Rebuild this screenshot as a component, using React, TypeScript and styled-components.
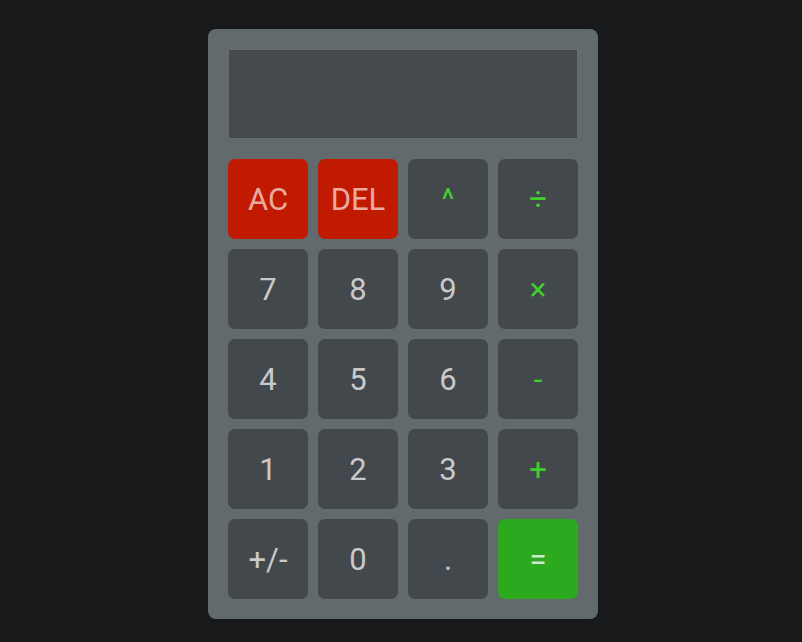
import React from "react";
import styled, { createGlobalStyle } from "styled-components";

const Global = createGlobalStyle`
  html, body { margin: 0; padding: 0; background: #18191b; }
  body { font-family: Roboto, "Noto Sans", sans-serif; }
`;

const Page = styled.div`
  display: flex;
  justify-content: center;
  align-items: flex-start;
  padding-top: 29px;
  padding-left: 4px;
  min-height: 642px;
  box-sizing: border-box;
`;

const Calc = styled.div`
  width: 390px;
  box-sizing: border-box;
  padding: 20px;
  background: #636a6d;
  border-radius: 8px;
  display: flex;
  flex-direction: column;
  gap: 20px;
`;

const Display = styled.div`
  height: 90px;
  box-sizing: border-box;
  background: #454a4e;
  border: 1px solid #6a6b6b;
`;

const Grid = styled.div`
  display: grid;
  grid-template-columns: repeat(4, 80px);
  grid-auto-rows: 80px;
  gap: 10px;
`;

type Kind = "num" | "op" | "clear" | "eq";

const bg: Record<Kind, string> = {
  num: "#43484c",
  op: "#43484c",
  clear: "#c01a00",
  eq: "#2ba91f",
};
const fg: Record<Kind, string> = {
  num: "#c9c9c9",
  op: "#3fd02f",
  clear: "#eaaaa2",
  eq: "#cde9c8",
};

const Key = styled.button<{ $kind: Kind }>`
  border: none;
  border-radius: 7px;
  background: ${(p) => bg[p.$kind]};
  color: ${(p) => fg[p.$kind]};
  font-family: Roboto, "Noto Sans", sans-serif;
  font-size: 31px;
  line-height: 1;
  display: flex;
  align-items: center;
  justify-content: center;
  padding: 0;
  cursor: pointer;
`;

const keys: [string, Kind][] = [
  ["AC", "clear"], ["DEL", "clear"], ["^", "op"], ["÷", "op"],
  ["7", "num"], ["8", "num"], ["9", "num"], ["×", "op"],
  ["4", "num"], ["5", "num"], ["6", "num"], ["-", "op"],
  ["1", "num"], ["2", "num"], ["3", "num"], ["+", "op"],
  ["+/-", "num"], ["0", "num"], [".", "num"], ["=", "eq"],
];

export default function App() {
  return (
    <>
      <Global />
      <Page>
        <Calc>
          <Display />
          <Grid>
            {keys.map(([k, kind]) => (
              <Key key={k} $kind={kind}>{k}</Key>
            ))}
          </Grid>
        </Calc>
      </Page>
    </>
  );
}
